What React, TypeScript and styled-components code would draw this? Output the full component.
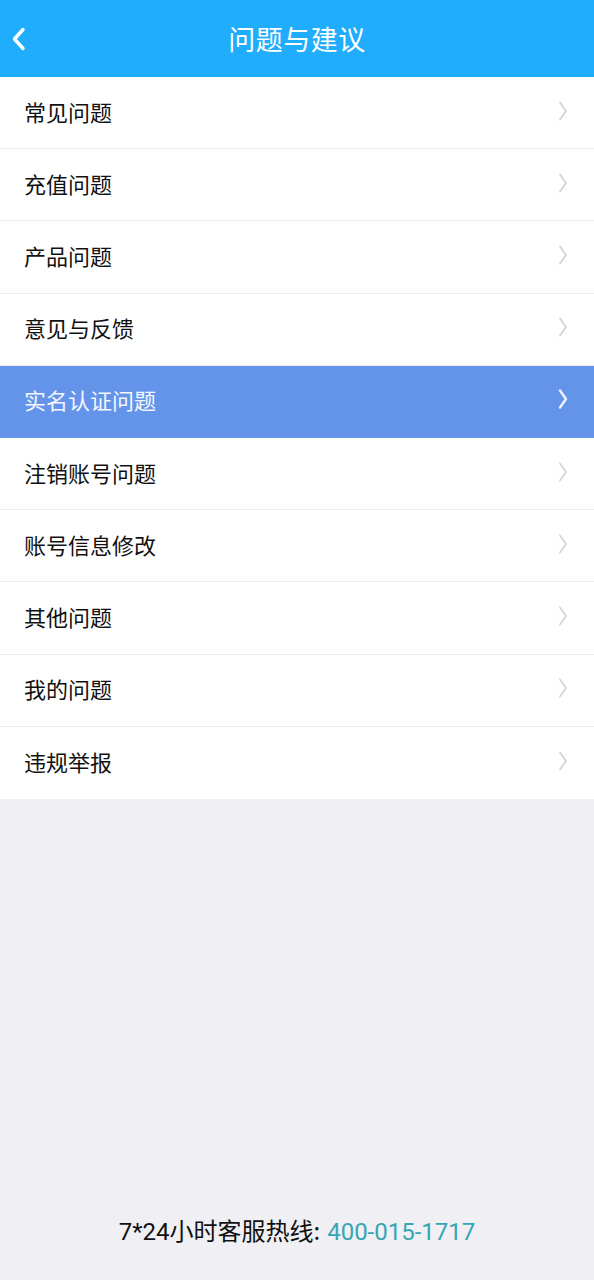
import { createGlobalStyle, styled } from 'styled-components';

const GlobalStyle = createGlobalStyle`
    html, body {
        margin: 0;
        padding: 0;
        background: #efeff4;
    }
    body {
        font-family: "Noto Sans CJK SC", Roboto, "Noto Sans", sans-serif;
    }
`;

const Page = styled.div`
    width: 594px;
    height: 1280px;
    display: flex;
    flex-direction: column;
    background: #efeff4;
`;

const Header = styled.header`
    height: 77px;
    background: #20adfe;
    display: grid;
    grid-template-columns: 60px 1fr 60px;
    align-items: center;
    flex-shrink: 0;
`;

const BackButton = styled.button`
    border: 0;
    background: none;
    padding: 0 0 0 11px;
    height: 100%;
    display: flex;
    align-items: center;
    cursor: pointer;
`;

const Title = styled.h1`
    margin: 0;
    text-align: center;
    color: #fff;
    font-size: 27px;
    font-weight: 400;
    letter-spacing: 0.5px;
`;

const List = styled.ul`
    list-style: none;
    margin: 0;
    padding: 0;
    background: #fff;
`;

const Row = styled.li<{ $active?: boolean }>`
    height: 71.2px;
    display: flex;
    align-items: center;
    justify-content: space-between;
    padding: 0 26px 0 24px;
    background: ${(p) => (p.$active ? '#6494ea' : '#fff')};
    color: ${(p) => (p.$active ? '#f4f7ff' : '#111')};
    font-size: 22px;
    border-bottom: 1px solid ${(p) => (p.$active ? '#6494ea' : '#ececec')};
    &:last-child {
        border-bottom: 0;
        height: 72.2px;
    }
`;

const Label = styled.span`
    margin-top: -4px;
`;

const Spacer = styled.div`
    flex: 1;
`;

const Footer = styled.footer`
    height: 98px;
    display: flex;
    justify-content: center;
    align-items: flex-start;
    padding-top: 30px;
    box-sizing: border-box;
    font-size: 24px;
    color: #111;
`;

const Hotline = styled.span`
    color: #37a6b3;
    margin-left: 7px;
    font-family: Roboto, sans-serif;
`;

const Digits = styled.span`
    font-family: Roboto, sans-serif;
`;

function Chevron({ active }: { active?: boolean }) {
    return (
        <svg width="10" height="22" viewBox="0 0 10 22" style={{ marginTop: -4 }}>
            <path
                d="M2 2.5 L8 11 L2 19.5"
                fill="none"
                stroke={active ? '#eef3ff' : '#d4d4d4'}
                strokeWidth={active ? 2.4 : 1.8}
                strokeLinecap="round"
                strokeLinejoin="round"
            />
        </svg>
    );
}

const items = [
    '常见问题',
    '充值问题',
    '产品问题',
    '意见与反馈',
    '实名认证问题',
    '注销账号问题',
    '账号信息修改',
    '其他问题',
    '我的问题',
    '违规举报',
];

export default function App() {
    return (
        <Page>
            <GlobalStyle />
            <Header>
                <BackButton aria-label="返回">
                    <svg width="16" height="24" viewBox="0 0 16 24">
                        <path
                            d="M12 2.5 L3.5 12 L12 21.5"
                            fill="none"
                            stroke="#fff"
                            strokeWidth="3.4"
                            strokeLinecap="round"
                            strokeLinejoin="round"
                        />
                    </svg>
                </BackButton>
                <Title>问题与建议</Title>
                <div />
            </Header>
            <List>
                {items.map((label) => (
                    <Row key={label} $active={label === '实名认证问题'}>
                        <Label>{label}</Label>
                        <Chevron active={label === '实名认证问题'} />
                    </Row>
                ))}
            </List>
            <Spacer />
            <Footer>
                <span>
                    <Digits>7*24</Digits>小时客服热线:
                    <Hotline>400-015-1717</Hotline>
                </span>
            </Footer>
        </Page>
    );
}
